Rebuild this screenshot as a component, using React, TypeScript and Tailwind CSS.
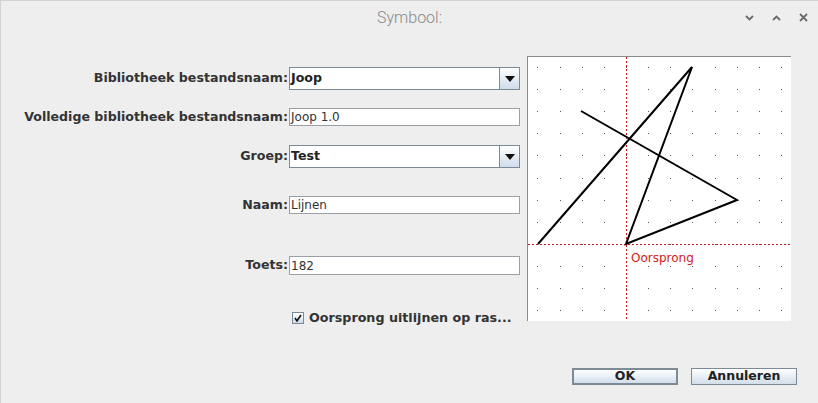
import React from "react";

const STEP = 22.15;
const OX = 98;
const OY = 187;

function ComboArrow() {
  return (
    <svg width="10" height="6" viewBox="0 0 10 6">
      <path d="M0 0H10L5 6Z" fill="#111" />
    </svg>
  );
}

function Combo({ value }: { value: string }) {
  return (
    <div className="flex h-[23px] w-[231px] border border-[#7a8a99] bg-white">
      <div className="flex flex-1 items-center pl-[1px] text-[12.6px] font-bold text-[#222]">{value}</div>
      <div className="flex w-[20px] items-center justify-center border-l border-[#7a8a99] bg-gradient-to-b from-white to-[#cfdcea]">
        <ComboArrow />
      </div>
    </div>
  );
}

function Field({ value, h = "h-[18px]" }: { value: string; h?: string }) {
  return (
    <div className={`flex w-[231px] items-center border border-[#9aa0a6] bg-white pl-[1px] text-[12px] text-[#333] ${h}`}>
      {value}
    </div>
  );
}

function Row({ label, children, className }: { label: string; children: React.ReactNode; className: string }) {
  return (
    <div className={`flex items-center ${className}`}>
      <div className="w-[288px] whitespace-nowrap pr-[1px] text-right text-[12.6px] font-bold text-[#333]">{label}</div>
      {children}
    </div>
  );
}

function Preview() {
  const dots: React.ReactNode[] = [];
  for (let i = -4; i <= 7; i++) {
    for (let j = -8; j <= 3; j++) {
      dots.push(<rect key={`${i}-${j}`} x={Math.round(OX + i * STEP)} y={Math.round(OY + j * STEP)} width="1" height="1" fill="#555" />);
    }
  }
  return (
    <div className="mt-[22px] h-[265px] w-[264px] border-l border-t border-[#8a8a8a] bg-white">
      <svg width="263" height="264" viewBox="0 0 263 264">
        {dots}
        <line x1={OX + 0.5} y1="0" x2={OX + 0.5} y2="264" stroke="#c41a1a" strokeWidth="1" strokeDasharray="2 2" />
        <line x1="0" y1={OY + 0.5} x2="263" y2={OY + 0.5} stroke="#c41a1a" strokeWidth="1" strokeDasharray="2 2" />
        <polyline points="10,187 164,10 98,187 209,143 53,54" fill="none" stroke="#000" strokeWidth="2" strokeLinejoin="miter" />
        <text x="103" y="205" fill="#d42020" fontSize="12" fontFamily="'DejaVu Sans', sans-serif">Oorsprong</text>
      </svg>
    </div>
  );
}

export default function App() {
  return (
    <div className="h-[403px] w-[818px] overflow-hidden border-l border-t border-[#d2d2d2] bg-[#eeeeee] font-['DejaVu_Sans',sans-serif]">
      <div className="relative flex h-[33px] items-center justify-center">
        <span className="font-['Roboto',sans-serif] text-[16px] font-light text-[#8a8a8a]">Symbool:</span>
        <div className="absolute right-[10px] top-[12px] flex items-center gap-[18px] text-[#6b6b6b]">
          <svg width="9" height="6" viewBox="0 0 9 6"><path d="M1 1L4.5 4.5L8 1" stroke="currentColor" strokeWidth="1.8" fill="none" /></svg>
          <svg width="9" height="6" viewBox="0 0 9 6"><path d="M1 5L4.5 1.5L8 5" stroke="currentColor" strokeWidth="1.8" fill="none" /></svg>
          <svg width="9" height="9" viewBox="0 0 9 9"><path d="M1 1L8 8M8 1L1 8" stroke="currentColor" strokeWidth="1.8" fill="none" /></svg>
        </div>
      </div>
      <div className="flex">
        <div className="flex w-[526px] flex-col">
          <Row label="Bibliotheek bestandsnaam:" className="mt-[33px] h-[23px]">
            <Combo value="Joop" />
          </Row>
          <Row label="Volledige bibliotheek bestandsnaam:" className="mt-[18px] h-[18px]">
            <Field value="Joop 1.0" />
          </Row>
          <Row label="Groep:" className="mt-[19px] h-[23px]">
            <Combo value="Test" />
          </Row>
          <Row label="Naam:" className="mt-[28px] h-[18px]">
            <Field value="Lijnen" />
          </Row>
          <Row label="Toets:" className="mt-[42px] h-[19px]">
            <Field value="182" h="h-[19px]" />
          </Row>
          <div className="mt-[36px] flex h-[13px] items-center pl-[291px]">
            <div className="flex h-[12px] w-[12px] items-center justify-center border border-[#7a8a99] bg-gradient-to-b from-white to-[#cfdcea]">
              <svg width="8" height="8" viewBox="0 0 8 8"><path d="M1 4L3 7L7 1" stroke="#111" strokeWidth="1.6" fill="none" /></svg>
            </div>
            <span className="ml-[5px] whitespace-nowrap text-[12.7px] font-bold text-[#333]">Oorsprong uitlijnen op ras...</span>
          </div>
        </div>
        <Preview />
      </div>
      <div className="mt-[44px] flex justify-end gap-[13px] pr-[21px]">
        <button className="h-[17px] w-[106px] border-2 border-[#7d8a97] bg-gradient-to-b from-white to-[#d2deea] text-[12.5px] font-bold leading-none text-[#222]">OK</button>
        <button className="h-[17px] w-[106px] border border-[#7a8a99] bg-gradient-to-b from-white to-[#d2deea] text-[12.5px] font-bold leading-none text-[#222]">Annuleren</button>
      </div>
    </div>
  );
}
